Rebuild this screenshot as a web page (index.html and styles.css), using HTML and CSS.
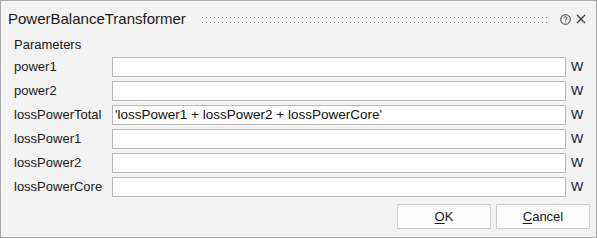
FILE: index.html
```html
<!DOCTYPE html>
<html>
<head>
<meta charset="utf-8">
<link rel="stylesheet" href="styles.css">
</head>
<body>
<div class="window">
  <div class="titlebar">
    <span class="title">PowerBalanceTransformer</span>
    <svg class="grip" height="6">
      <defs>
        <pattern id="dots" width="4" height="5" patternUnits="userSpaceOnUse">
          <rect x="0" y="0" width="1" height="1" fill="#8a8a8a"/>
        </pattern>
      </defs>
      <rect x="0" y="0" width="100%" height="6" fill="url(#dots)"/>
    </svg>
    <svg class="icon help" width="11" height="11" viewBox="0 0 11 11">
      <circle cx="5.5" cy="5.5" r="4.8" fill="none" stroke="#333" stroke-width="1"/>
      <path d="M3.9 4.3 C3.9 3.3 4.6 2.8 5.5 2.8 C6.4 2.8 7.1 3.3 7.1 4.1 C7.1 5 5.6 5.2 5.6 6.4" fill="none" stroke="#333" stroke-width="1"/>
      <rect x="5.1" y="7.4" width="1" height="1" fill="#333"/>
    </svg>
    <svg class="icon close" width="10" height="10" viewBox="0 0 10 10">
      <path d="M1 1 L9 9 M9 1 L1 9" stroke="#333" stroke-width="1.1" fill="none"/>
    </svg>
  </div>
  <div class="content">
    <div class="section">Parameters</div>
    <div class="grid">
      <label class="lbl">power1</label><div class="field"></div><span class="unit">W</span>
      <label class="lbl">power2</label><div class="field"></div><span class="unit">W</span>
      <label class="lbl">lossPowerTotal</label><div class="field">'lossPower1 + lossPower2 + lossPowerCore'</div><span class="unit">W</span>
      <label class="lbl">lossPower1</label><div class="field"></div><span class="unit">W</span>
      <label class="lbl">lossPower2</label><div class="field"></div><span class="unit">W</span>
      <label class="lbl">lossPowerCore</label><div class="field"></div><span class="unit">W</span>
    </div>
  </div>
  <div class="buttons">
    <button class="btn"><u>O</u>K</button>
    <button class="btn"><u>C</u>ancel</button>
  </div>
</div>
</body>
</html>
```

FILE: styles.css
```css
html, body {
  margin: 0;
  padding: 0;
  background: #f3f3f3;
}
.window {
  box-sizing: border-box;
  width: 597px;
  height: 238px;
  border: 1px solid #a9a9a9;
  background: #f3f3f3;
  font-family: "Liberation Sans", Arial, sans-serif;
  color: #1a1a1a;
  display: flex;
  flex-direction: column;
}
.titlebar {
  height: 36px;
  display: flex;
  align-items: center;
  padding: 0 10px 0 7px;
}
.title {
  font-size: 15px;
  line-height: 20px;
  white-space: nowrap;
}
.grip {
  flex: 1;
  min-width: 0;
  display: block;
  margin: 2px 13px 0 16px;
}
.icon {
  display: block;
  flex: none;
}
.close {
  margin-left: 5px;
}
.content {
  padding-left: 13px;
}
.section {
  font-size: 13px;
  line-height: 16px;
  margin-bottom: 4px;
}
.grid {
  display: grid;
  grid-template-columns: 98px 454px auto;
  grid-auto-rows: 20px;
  row-gap: 4px;
  align-items: center;
  font-size: 13px;
}
.lbl {
  white-space: nowrap;
  line-height: 16px;
}
.field {
  box-sizing: border-box;
  height: 20px;
  background: #ffffff;
  border: 1px solid #b9b9b9;
  padding: 0 2px;
  line-height: 18px;
  white-space: nowrap;
  overflow: hidden;
  color: #111;
  font-size: 13.5px;
}
.unit {
  margin-left: 5px;
  color: #141428;
  line-height: 16px;
}
.buttons {
  display: flex;
  justify-content: flex-end;
  gap: 5px;
  margin-top: 7px;
  padding-right: 6px;
}
.btn {
  box-sizing: border-box;
  width: 94px;
  height: 25px;
  background: #fdfdfd;
  border: 1px solid #cdcdcd;
  border-radius: 1px;
  font-family: "Liberation Sans", Arial, sans-serif;
  font-size: 13px;
  color: #1a1a1a;
  padding: 0;
}
.btn u {
  text-decoration-thickness: 1px;
  text-underline-offset: 2px;
}
```
